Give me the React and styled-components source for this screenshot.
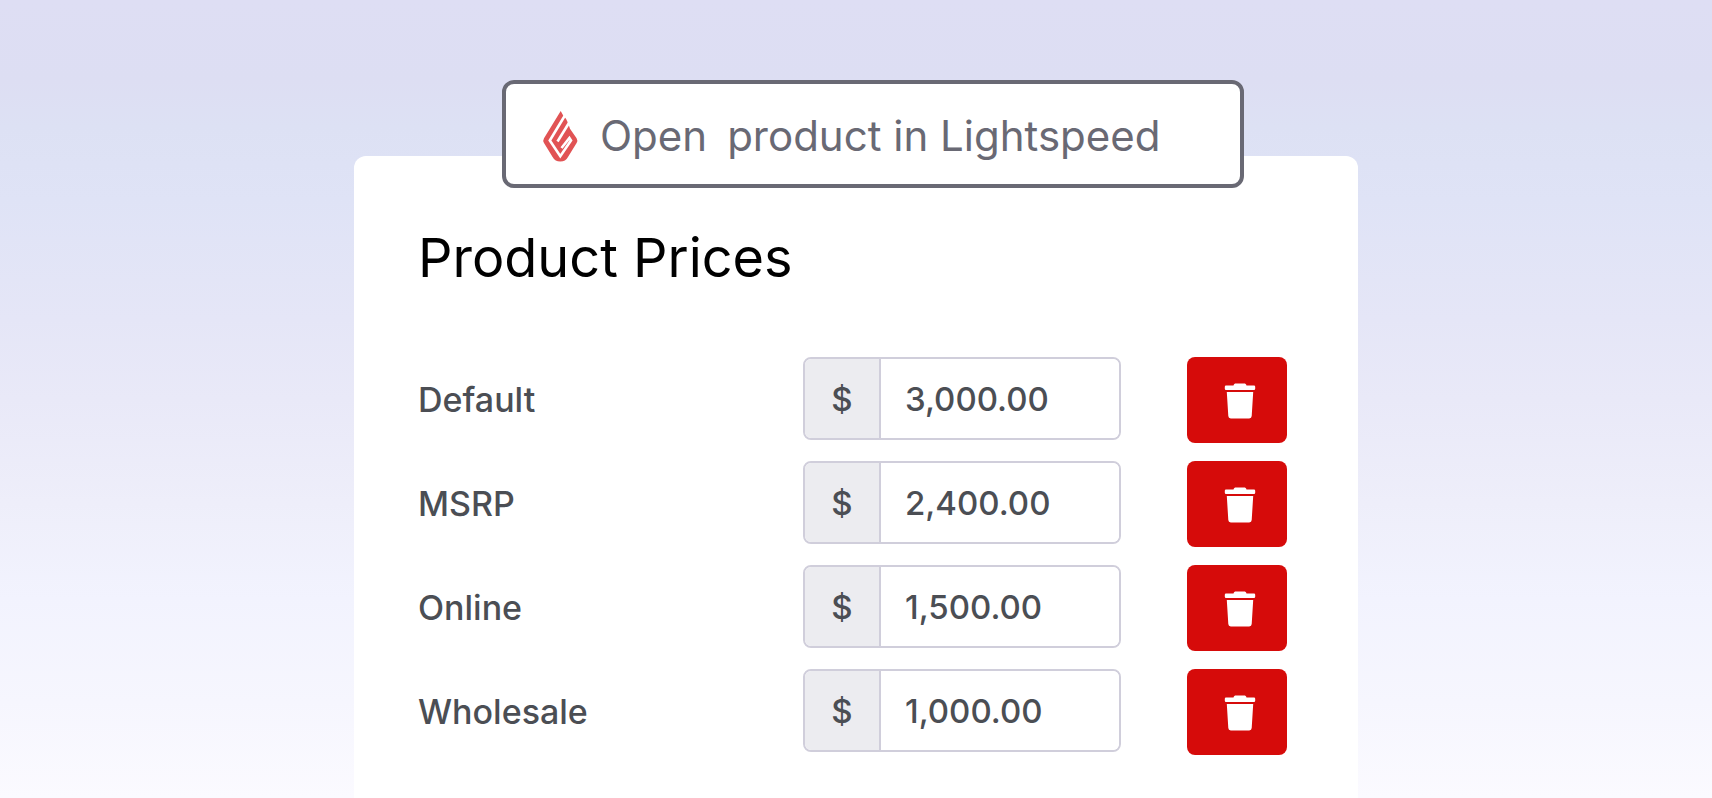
import React, { useState } from 'react'
import styled, { createGlobalStyle } from 'styled-components'

const prices = [
    { id: 'default', label: 'Default', amount: '3,000.00' },
    { id: 'msrp', label: 'MSRP', amount: '2,400.00' },
    { id: 'online', label: 'Online', amount: '1,500.00' },
    { id: 'wholesale', label: 'Wholesale', amount: '1,000.00' },
]

const FlameLogo = () => (
    <svg width="40" height="60" viewBox="0 -2 40 60" fill="none" aria-hidden="true">
        <path
            fill="#e15354"
            d="M20.700 3L4 30.300Q2.600 32.500 4 35L12.600 49Q15 53.600 20.300 53.600T28 49L36.600 35Q38 32.500 36.600 30.300L30 20.700L28 15L26 10.700L23.200 7.500z"
        />
        <path stroke="white" strokeWidth="2.600" d="M25.500 6.500L9.800 32.500L20.300 48.200L31 32.500L29.400 30L21.500 40" />
        <path stroke="white" strokeWidth="2.600" d="M30.500 12.500L17.500 33.500" />
    </svg>
)

const TrashIcon = () => (
    <svg width="32" height="36" viewBox="0 0 32 36" fill="currentColor" aria-hidden="true">
        <path d="M2 2.500h7.500C10 1 10.500 0.500 12 0.500h8c1.500 0 2 0.500 2.500 2H30a1.200 1.200 0 0 1 1.200 1.200v2.100A1.200 1.200 0 0 1 30 7H2A1.200 1.200 0 0 1 0.800 5.800V3.700A1.200 1.200 0 0 1 2 2.500z" />
        <path d="M2.800 9h26.400l-1.500 24a2.500 2.500 0 0 1-2.500 2.400H6.800A2.500 2.500 0 0 1 4.300 33z" />
    </svg>
)

const PriceRow = ({ id, label, amount }) => {
    const [value, setValue] = useState(amount)

    return (
        <Row>
            <Label htmlFor={id}>{label}</Label>
            <Field>
                <Currency>$</Currency>
                <Amount id={id} value={value} onChange={e => setValue(e.target.value)} />
            </Field>
            <DeleteButton type="button" aria-label={`Delete ${label} price`}>
                <TrashIcon />
            </DeleteButton>
        </Row>
    )
}

const App = () => (
    <Page>
        <GlobalStyle />
        <Stage>
            <OpenButton type="button">
                <FlameLogo />
                <OpenText>
                    <span>Open</span>
                    <span>product in Lightspeed</span>
                </OpenText>
            </OpenButton>
            <Card>
                <Title>Product Prices</Title>
                <Rows>
                    {prices.map(price => <PriceRow key={price.id} {...price} />)}
                </Rows>
            </Card>
        </Stage>
    </Page>
)

const GlobalStyle = createGlobalStyle`
    * {
        box-sizing: border-box;
    }

    body {
        margin: 0;
        font-family: Inter, "Liberation Sans", sans-serif;
    }

    button, input {
        font-family: inherit;
    }
`

const Page = styled.main`
    min-height: 100vh;
    padding: 80px 24px 0;
    display: flex;
    justify-content: center;
    background: linear-gradient(
        #dedef4 0%,
        #dddef3 10%,
        #dde1f4 16%,
        #dfe3f6 25%,
        #e5e6f7 40%,
        #e9e9f8 50%,
        #eeeefa 63%,
        #f2f3fe 75%,
        #f6f6fe 88%,
        #fbfaff 100%
    );
`

const Stage = styled.div`
    width: 100%;
    max-width: 1004px;
    display: flex;
    flex-direction: column;
`

const OpenButton = styled.button`
    position: relative;
    z-index: 1;
    height: 108px;
    margin: 0 114px -32px 148px;
    padding: 4px 34px 0;
    display: flex;
    align-items: center;
    gap: 20px;
    background: white;
    border: 4px solid #696974;
    border-radius: 12px;
    color: #696974;
    cursor: pointer;

    @media (max-width: 960px) {
        margin: 0 24px -32px;
    }
`

const OpenText = styled.span`
    display: flex;
    gap: 20px;
    font-size: 42px;
    line-height: 48px;
    white-space: nowrap;
`

const Card = styled.section`
    flex: 1;
    padding: 70px 71px 40px 64px;
    background: white;
    border-radius: 12px 12px 0 0;
`

const Title = styled.h1`
    margin: 0;
    font-size: 54px;
    font-weight: 400;
    line-height: 64px;
    color: black;
`

const Rows = styled.div`
    margin-top: 67px;
    display: grid;
    gap: 18px;
`

const Row = styled.div`
    display: grid;
    grid-template-columns: 1fr 318px 100px;
    column-gap: 66px;
`

const Label = styled.label`
    font-size: 34px;
    font-weight: 500;
    line-height: 86px;
    color: #4b4e54;
`

const Field = styled.div`
    height: 83px;
    display: flex;
    overflow: hidden;
    border: 2px solid #d0cedb;
    border-radius: 8px;
`

const Currency = styled.span`
    flex: 0 0 76px;
    display: grid;
    place-items: center;
    background: #ececf0;
    border-right: 2px solid #d0cedb;
    font-size: 33px;
    font-weight: 500;
    color: #4b4e54;
`

const Amount = styled.input`
    flex: 1;
    min-width: 0;
    padding: 0 24px;
    border: 0;
    outline: 0;
    background: white;
    font-size: 33px;
    font-weight: 500;
    color: #4b4e54;
`

const DeleteButton = styled.button`
    height: 86px;
    padding: 2px 0 0 6px;
    display: grid;
    place-items: center;
    background: #d60b0a;
    border: 0;
    border-radius: 8px;
    color: white;
    cursor: pointer;
`

export default App
